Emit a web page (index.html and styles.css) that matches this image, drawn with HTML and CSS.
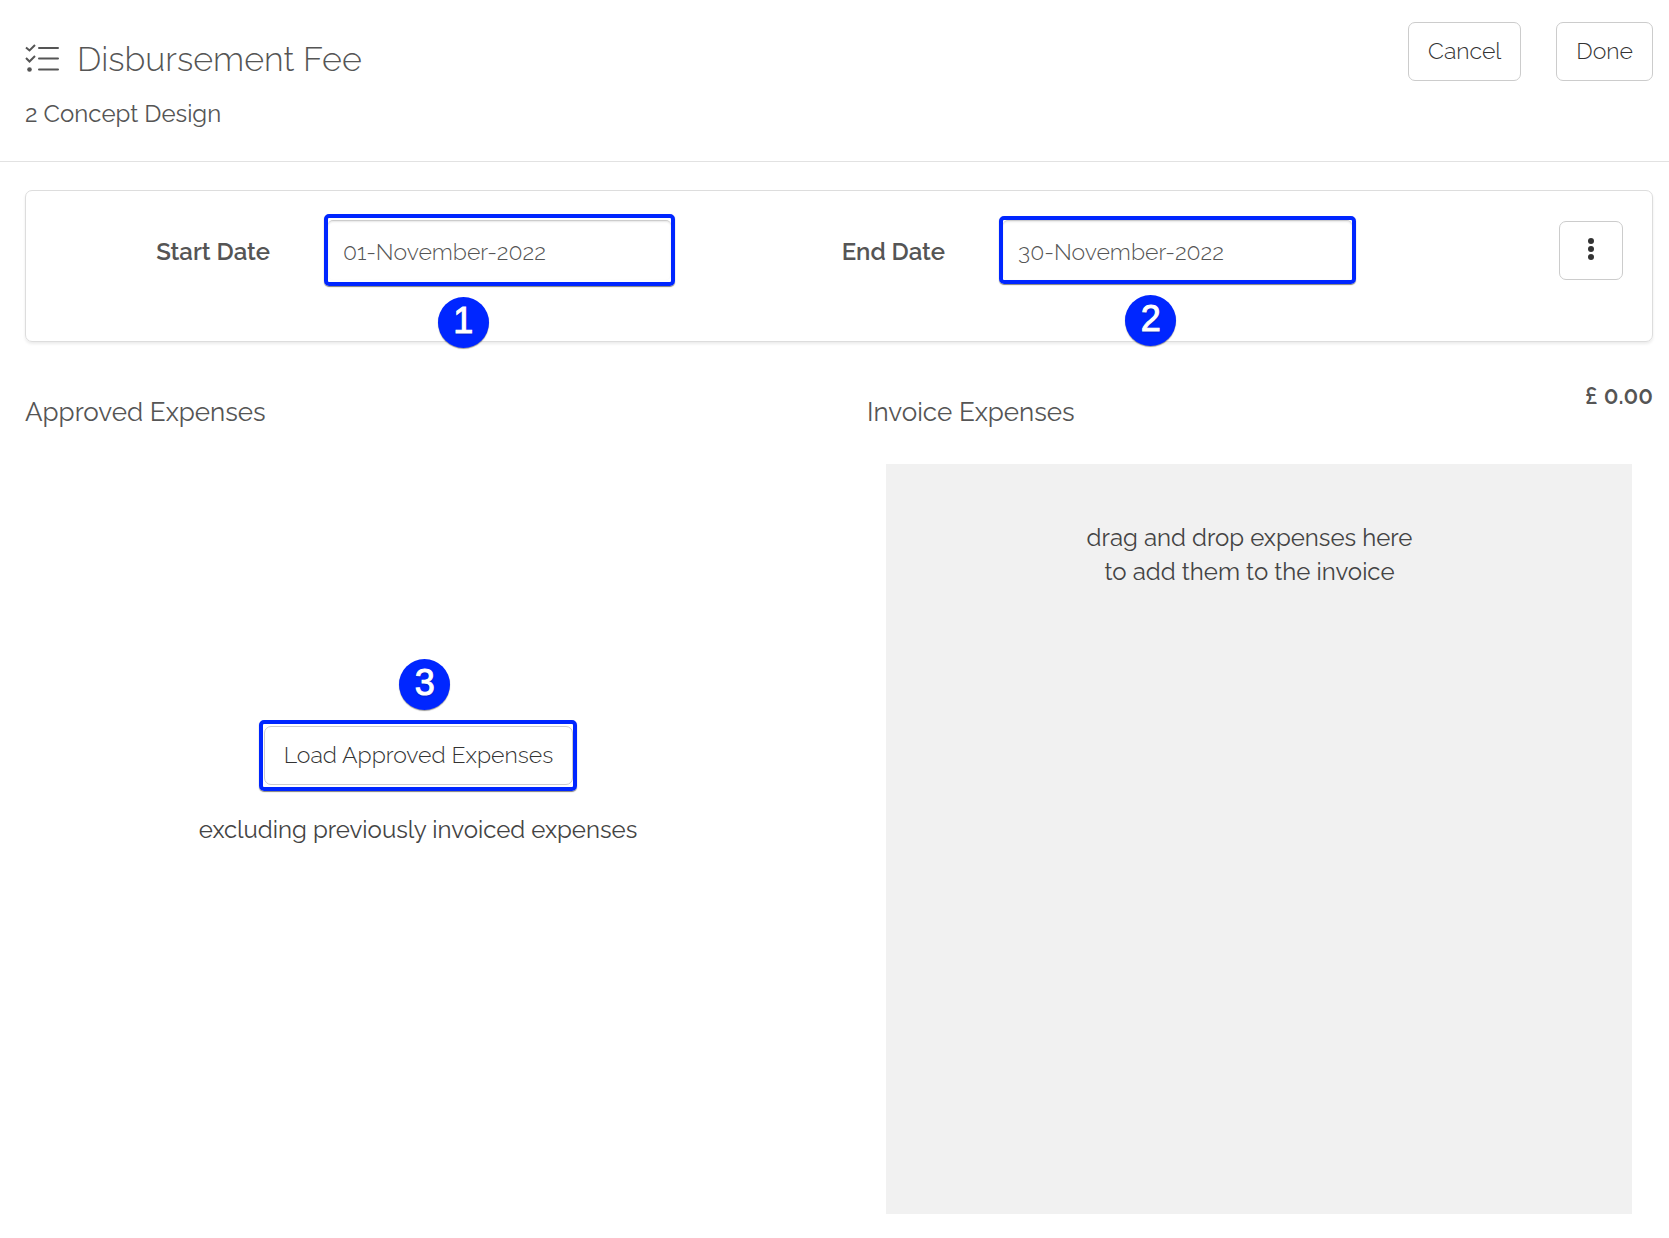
FILE: index.html
```html
<!DOCTYPE html>
<html lang="en">
<head>
    <meta charset="UTF-8">
    <meta name="viewport" content="width=device-width, initial-scale=1.0">
    <title>Disbursement Fee</title>
    <link rel="stylesheet" href="styles.css">
</head>
<body>
    <header class="page-header">
        <div class="heading">
            <h1 class="title">
                <svg class="title-icon" width="36" height="30" viewBox="0 0 36 30" fill="none" stroke="currentColor" stroke-width="2" aria-hidden="true">
                    <path d="M1 3.500l3.500 3L10 1M1 14l3.500 3.500L10 12"/>
                    <path d="M14 4h19M14 14.500h19M14 25.500h19" stroke-linecap="round"/>
                    <circle cx="4.500" cy="25.500" r="2.300" fill="currentColor" stroke="none"/>
                </svg>
                Disbursement Fee
            </h1>
            <p class="subtitle">2 Concept Design</p>
        </div>
        <div class="actions">
            <button type="button" class="btn">Cancel</button>
            <button type="button" class="btn">Done</button>
        </div>
    </header>

    <main class="content">
        <form class="date-card">
            <label class="date-label" for="startDate">Start Date</label>
            <div class="highlight highlight-start">
                <input type="text" id="startDate" class="date-input" value="01-November-2022">
                <span class="badge">1</span>
            </div>
            <label class="date-label" for="endDate">End Date</label>
            <div class="highlight highlight-end">
                <input type="text" id="endDate" class="date-input" value="30-November-2022">
                <span class="badge">2</span>
            </div>
            <button type="button" class="btn btn-menu" aria-label="More options">
                <svg width="6" height="22" viewBox="0 0 6 22" fill="#333" aria-hidden="true">
                    <circle cx="3" cy="3" r="3"/>
                    <circle cx="3" cy="11" r="3"/>
                    <circle cx="3" cy="19" r="3"/>
                </svg>
            </button>
        </form>

        <div class="columns">
            <section>
                <h2 class="section-title">Approved Expenses</h2>
                <div class="load-area">
                    <div class="highlight highlight-load">
                        <button type="button" class="btn">Load Approved Expenses</button>
                        <span class="badge">3</span>
                    </div>
                    <p class="hint">excluding previously invoiced expenses</p>
                </div>
            </section>
            <section>
                <div class="section-head">
                    <h2 class="section-title">Invoice Expenses</h2>
                    <strong class="total">£ 0.00</strong>
                </div>
                <div class="drop-zone">
                    <p class="hint">drag and drop expenses here<br>to add them to the invoice</p>
                </div>
            </section>
        </div>
    </main>
</body>
</html>
```

FILE: styles.css
```css
* {
    box-sizing: border-box;
}
body {
    margin: 0;
    font-family: Raleway, "Open Sans", sans-serif;
    font-size: 24px;
    font-weight: 400;
    line-height: 34px;
    color: #555;
    background: #fff;
}
h1, h2, p {
    margin: 0;
    font-weight: 400;
}
.page-header {
    display: flex;
    justify-content: space-between;
    align-items: flex-start;
    padding: 22px 16px 30px 25px;
    border-bottom: 1px solid #e2e2e2;
}
.heading {
    padding-top: 15px;
}
.title {
    display: flex;
    align-items: center;
    gap: 16px;
    font-size: 34px;
    font-weight: 300;
    line-height: 44px;
}
.subtitle {
    padding-top: 16px;
}
.actions {
    display: flex;
    gap: 35px;
}
.btn {
    height: 59px;
    padding: 0 19px 2px;
    border: 1px solid #ccc;
    border-radius: 7px;
    background: #fff;
    color: #333;
    font: inherit;
    font-size: 23px;
    font-weight: 300;
    white-space: nowrap;
}
.content {
    padding: 28px 16px 24px 25px;
}
.date-card {
    display: grid;
    grid-template-columns: 244fr 351fr 216fr 357fr 213fr;
    column-gap: 54px;
    align-items: center;
    height: 152px;
    padding: 0 29px 32px 0;
    border: 1px solid #ddd;
    border-radius: 7px;
    box-shadow: 0 2px 3px rgba(0, 0, 0, 0.08);
}
.date-label {
    padding-top: 4px;
    font-weight: 600;
    text-align: right;
}
.highlight {
    position: relative;
    border: 4px solid #0026ff;
    border-radius: 5px;
    box-shadow: 0 1px 1px rgba(0, 0, 0, 0.5);
}
.highlight-start {
    padding: 2px 0;
}
.date-input {
    display: block;
    width: 100%;
    height: 60px;
    padding: 2px 15px 0;
    border: 0;
    border-top: 1px solid #ccc;
    border-radius: 5px;
    box-shadow: inset 0 1px 2px rgba(0, 0, 0, 0.1);
    background: #fff;
    color: #555;
    font: inherit;
    font-size: 23px;
    font-weight: 300;
}
.btn-menu {
    justify-self: end;
    display: flex;
    align-items: center;
    justify-content: center;
    width: 64px;
}
.badge {
    position: absolute;
    top: calc(100% + 15px);
    width: 51px;
    height: 51px;
    border-radius: 50%;
    background: #0026ff;
    box-shadow: 0 1px 1px rgba(0, 0, 0, 0.4);
    color: #fff;
    font-family: "Liberation Sans", Arial, sans-serif;
    font-size: 36px;
    line-height: 48px;
    text-align: center;
    text-shadow: 0 1px 2px rgba(0, 0, 0, 0.4);
    -webkit-text-stroke: 1px #fff;
}
.highlight-start .badge {
    left: 32%;
}
.highlight-end .badge {
    left: 35%;
}
.columns {
    display: grid;
    grid-template-columns: 1fr 1fr;
    gap: 56px;
    padding-top: 37px;
}
.section-head {
    display: flex;
    justify-content: space-between;
    align-items: flex-start;
}
.section-title {
    padding-top: 16px;
    font-size: 26px;
}
.total {
    font-weight: 600;
}
.load-area {
    display: flex;
    flex-direction: column;
    align-items: center;
    gap: 22px;
    padding-top: 291px;
}
.highlight-load {
    padding: 2px 0 2px 1px;
}
.highlight-load .badge {
    top: auto;
    bottom: calc(100% + 14px);
    left: 44%;
}
.hint {
    text-align: center;
    color: #444;
}
.drop-zone {
    min-height: 750px;
    margin: 35px 21px 0 19px;
    padding: 57px 19px 0 0;
    background: #f1f1f1;
}
```
